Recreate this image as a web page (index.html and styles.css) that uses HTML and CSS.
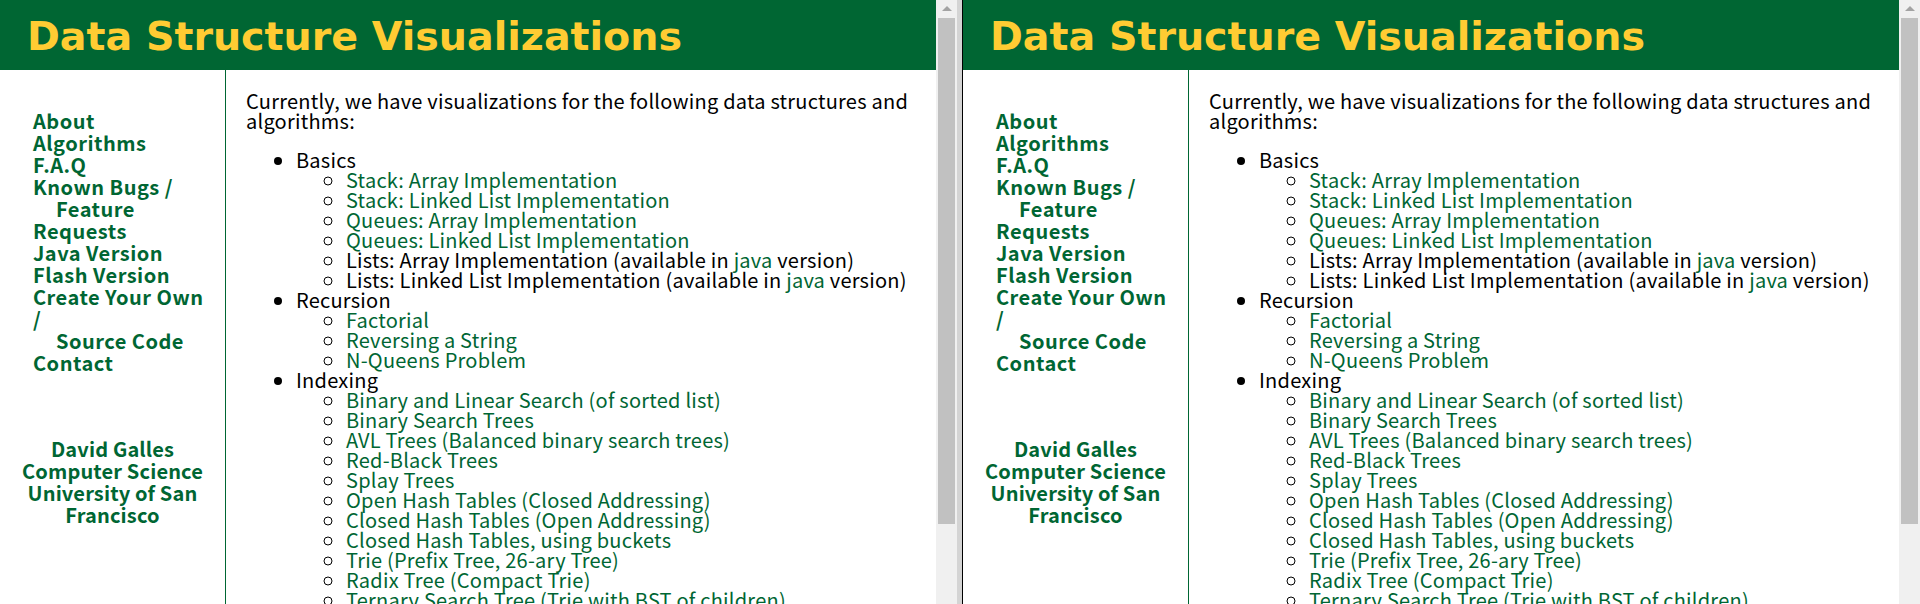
FILE: index.html
```html
<!DOCTYPE html>
<html lang="en">
<head>
  <meta charset="UTF-8" />
  <title>Data Structure Visualizations</title>
  <link rel="stylesheet" href="styles.css">
</head>
<body>
  <div class="frames">

    <div class="frame">
      <div class="page">
        <div class="header"><h1>Data Structure Visualizations</h1></div>
        <div class="main">
          <div class="sidebar">
            <div class="nav">
              <a href="#">About</a>
              <a href="#">Algorithms</a>
              <a href="#">F.A.Q</a>
              <a href="#">Known Bugs /<br><span class="indent">Feature</span><br>Requests</a>
              <a href="#">Java Version</a>
              <a href="#">Flash Version</a>
              <a href="#">Create Your Own<br>/<br><span class="indent">Source Code</span></a>
              <a href="#">Contact</a>
            </div>
            <div class="credit">
              <a href="#">David Galles</a><br>
              <a href="#">Computer Science</a><br>
              <a href="#">University of San Francisco</a>
            </div>
          </div>
          <div class="content">
            <p>Currently, we have visualizations for the following data structures and algorithms:</p>
            <ul>
              <li>Basics
                <ul>
                  <li><a href="#">Stack: Array Implementation</a></li>
                  <li><a href="#">Stack: Linked List Implementation</a></li>
                  <li><a href="#">Queues: Array Implementation</a></li>
                  <li><a href="#">Queues: Linked List Implementation</a></li>
                  <li>Lists: Array Implementation (available in <a href="#">java</a> version)</li>
                  <li>Lists: Linked List Implementation (available in <a href="#">java</a> version)</li>
                </ul>
              </li>
              <li>Recursion
                <ul>
                  <li><a href="#">Factorial</a></li>
                  <li><a href="#">Reversing a String</a></li>
                  <li><a href="#">N-Queens Problem</a></li>
                </ul>
              </li>
              <li>Indexing
                <ul>
                  <li><a href="#">Binary and Linear Search (of sorted list)</a></li>
                  <li><a href="#">Binary Search Trees</a></li>
                  <li><a href="#">AVL Trees (Balanced binary search trees)</a></li>
                  <li><a href="#">Red-Black Trees</a></li>
                  <li><a href="#">Splay Trees</a></li>
                  <li><a href="#">Open Hash Tables (Closed Addressing)</a></li>
                  <li><a href="#">Closed Hash Tables (Open Addressing)</a></li>
                  <li><a href="#">Closed Hash Tables, using buckets</a></li>
                  <li><a href="#">Trie (Prefix Tree, 26-ary Tree)</a></li>
                  <li><a href="#">Radix Tree (Compact Trie)</a></li>
                  <li><a href="#">Ternary Search Tree (Trie with BST of children)</a></li>
                  <li><a href="#">B Trees</a></li>
                  <li><a href="#">B+ Trees</a></li>
                </ul>
              </li>
              <li>Sorting
                <ul>
                  <li><a href="#">Comparison Sorting</a></li>
                  <li><a href="#">Bucket Sort</a></li>
                  <li><a href="#">Counting Sort</a></li>
                  <li><a href="#">Radix Sort</a></li>
                  <li><a href="#">Heap Sort</a></li>
                </ul>
              </li>
            </ul>
          </div>
        </div>
      </div>
      <div class="scrollbar"><div class="arrow"></div><div class="thumb"></div></div>
    </div>

    <div class="divider"></div>

    <div class="frame">
      <div class="page">
        <div class="header"><h1>Data Structure Visualizations</h1></div>
        <div class="main">
          <div class="sidebar">
            <div class="nav">
              <a href="#">About</a>
              <a href="#">Algorithms</a>
              <a href="#">F.A.Q</a>
              <a href="#">Known Bugs /<br><span class="indent">Feature</span><br>Requests</a>
              <a href="#">Java Version</a>
              <a href="#">Flash Version</a>
              <a href="#">Create Your Own<br>/<br><span class="indent">Source Code</span></a>
              <a href="#">Contact</a>
            </div>
            <div class="credit">
              <a href="#">David Galles</a><br>
              <a href="#">Computer Science</a><br>
              <a href="#">University of San Francisco</a>
            </div>
          </div>
          <div class="content">
            <p>Currently, we have visualizations for the following data structures and algorithms:</p>
            <ul>
              <li>Basics
                <ul>
                  <li><a href="#">Stack: Array Implementation</a></li>
                  <li><a href="#">Stack: Linked List Implementation</a></li>
                  <li><a href="#">Queues: Array Implementation</a></li>
                  <li><a href="#">Queues: Linked List Implementation</a></li>
                  <li>Lists: Array Implementation (available in <a href="#">java</a> version)</li>
                  <li>Lists: Linked List Implementation (available in <a href="#">java</a> version)</li>
                </ul>
              </li>
              <li>Recursion
                <ul>
                  <li><a href="#">Factorial</a></li>
                  <li><a href="#">Reversing a String</a></li>
                  <li><a href="#">N-Queens Problem</a></li>
                </ul>
              </li>
              <li>Indexing
                <ul>
                  <li><a href="#">Binary and Linear Search (of sorted list)</a></li>
                  <li><a href="#">Binary Search Trees</a></li>
                  <li><a href="#">AVL Trees (Balanced binary search trees)</a></li>
                  <li><a href="#">Red-Black Trees</a></li>
                  <li><a href="#">Splay Trees</a></li>
                  <li><a href="#">Open Hash Tables (Closed Addressing)</a></li>
                  <li><a href="#">Closed Hash Tables (Open Addressing)</a></li>
                  <li><a href="#">Closed Hash Tables, using buckets</a></li>
                  <li><a href="#">Trie (Prefix Tree, 26-ary Tree)</a></li>
                  <li><a href="#">Radix Tree (Compact Trie)</a></li>
                  <li><a href="#">Ternary Search Tree (Trie with BST of children)</a></li>
                  <li><a href="#">B Trees</a></li>
                  <li><a href="#">B+ Trees</a></li>
                </ul>
              </li>
              <li>Sorting
                <ul>
                  <li><a href="#">Comparison Sorting</a></li>
                  <li><a href="#">Bucket Sort</a></li>
                  <li><a href="#">Counting Sort</a></li>
                  <li><a href="#">Radix Sort</a></li>
                  <li><a href="#">Heap Sort</a></li>
                </ul>
              </li>
            </ul>
          </div>
        </div>
      </div>
      <div class="scrollbar"><div class="arrow"></div><div class="thumb"></div></div>
    </div>

  </div>
</body>
</html>
```

FILE: styles.css
```css
body {
  margin: 0;
  font-family: 'Noto Sans CJK SC', 'Noto Sans', sans-serif;
  font-size: 20px;
  color: #000;
  background: #fff;
}
a {
  color: #006633;
  text-decoration: none;
}
.frames {
  display: flex;
  height: 604px;
  overflow: hidden;
}
.frame {
  display: flex;
  width: 957px;
  flex: none;
}
.page {
  flex: 1;
  overflow: hidden;
}
.divider {
  width: 5px;
  flex: none;
  background: #d4d4d4;
  border-right: 1px solid #000;
}
.scrollbar {
  width: 21px;
  flex: none;
  background: #f0f0f0;
  display: flex;
  flex-direction: column;
  align-items: center;
}
.arrow {
  margin-top: 6px;
  width: 0;
  height: 0;
  border-left: 5px solid transparent;
  border-right: 5px solid transparent;
  border-bottom: 5px solid #a3a3a3;
}
.thumb {
  margin-top: 7px;
  width: 17px;
  height: 506px;
  background: #c1c1c1;
}
.header {
  height: 70px;
  box-sizing: border-box;
  padding: 12px 0 0 27px;
  background: #006633;
}
.header h1 {
  margin: 0;
  font-family: 'DejaVu Sans', Verdana, sans-serif;
  font-size: 39.6px;
  line-height: 48px;
  font-weight: bold;
  color: #ffcc33;
  white-space: nowrap;
}
.main {
  display: flex;
  height: 534px;
}
.sidebar {
  width: 225px;
  flex: none;
  border-right: 1px solid #006633;
  font-weight: bold;
}
.nav {
  padding: 40px 0 0 33px;
  line-height: 22px;
  letter-spacing: 0.5px;
}
.nav a {
  display: block;
}
.indent {
  padding-left: 23px;
}
.credit {
  margin-top: 64px;
  padding: 0 10px;
  text-align: center;
  line-height: 22px;
  letter-spacing: 0.15px;
}
.content {
  flex: 1;
  padding: 21px 20px 0 20px;
  line-height: 20px;
  letter-spacing: 0.23px;
}
.content p {
  margin: 0 0 19px 0;
}
.content ul {
  margin: 0;
  padding-left: 50px;
}
.content ul ul {
  list-style-type: circle;
}
```
